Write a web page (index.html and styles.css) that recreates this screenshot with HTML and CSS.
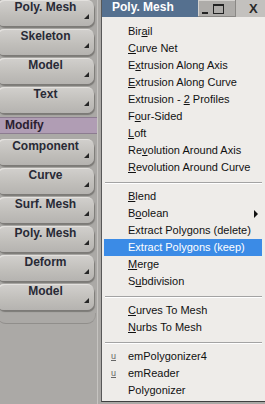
FILE: index.html
```html
<!DOCTYPE html>
<html>
<head>
    <meta charset="utf-8">
    <title>Poly. Mesh</title>
    <link rel="stylesheet" href="styles.css">
</head>
<body>

    <div class="shelf">
        <div class="tool">Poly. Mesh</div>
        <div class="tool">Skeleton</div>
        <div class="tool">Model</div>
        <div class="tool">Text</div>
        <div class="group">Modify</div>
        <div class="tool">Component</div>
        <div class="tool">Curve</div>
        <div class="tool">Surf. Mesh</div>
        <div class="tool">Poly. Mesh</div>
        <div class="tool">Deform</div>
        <div class="tool">Model</div>
        <div class="tool-end"></div>
    </div>

    <div class="menu">
        <div class="titlebar">
            <div class="title">Poly. Mesh</div>
            <div class="winbtns">
                <div class="btngroup">
                    <span class="wb-min"></span>
                    <span class="wb-max"></span>
                </div>
                <span class="wb-close">X</span>
            </div>
        </div>
        <div class="items">
            <div class="item">Bir<u>a</u>il</div>
            <div class="item"><u>C</u>urve Net</div>
            <div class="item">E<u>x</u>trusion Along Axis</div>
            <div class="item"><u>E</u>xtrusion Along Curve</div>
            <div class="item">Extrusion - <u>2</u> Profiles</div>
            <div class="item">F<u>o</u>ur-Sided</div>
            <div class="item"><u>L</u>oft</div>
            <div class="item">Re<u>v</u>olution Around Axis</div>
            <div class="item"><u>R</u>evolution Around Curve</div>
            <div class="sep"></div>
            <div class="item"><u>B</u>lend</div>
            <div class="item sub">B<u>o</u>olean</div>
            <div class="item">Extract Polygons (delete)</div>
            <div class="item active">Extract Polygons (keep)</div>
            <div class="item"><u>M</u>erge</div>
            <div class="item">S<u>u</u>bdivision</div>
            <div class="sep"></div>
            <div class="item"><u>C</u>urves To Mesh</div>
            <div class="item"><u>N</u>urbs To Mesh</div>
            <div class="sep"></div>
            <div class="item"><span class="mark">u</span>emPolygonizer4</div>
            <div class="item"><span class="mark">u</span>emReader</div>
            <div class="item">Polygonizer</div>
        </div>
    </div>

</body>
</html>
```

FILE: styles.css
```css
body {
    margin: 0;
    height: 404px;
    overflow: hidden;
    display: flex;
    background-color: #aba9a6;
    font-family: "Liberation Sans", Arial, sans-serif;
}

/* left shelf */
.shelf {
    width: 97px;
    border-right: 1px solid #c6c4c1;
    display: flex;
    flex-direction: column;
    gap: 3px;
}

.tool {
    position: relative;
    height: 26px;
    line-height: 27px;
    margin-left: -3px;
    margin-right: 3px;
    border-radius: 7px;
    background: linear-gradient(#d2d0cd, #c0beba 60%, #b5b3b0);
    box-shadow: 1px 2px 1px #7c7a77, inset 1px 1px 0 #e3e1de;
    text-align: center;
    font: bold 12px "Liberation Sans", Arial, sans-serif;
    color: #282a36;
}

.tool::after {
    content: "";
    position: absolute;
    right: 5px;
    bottom: 7px;
    width: 0;
    height: 0;
    border-style: solid;
    border-width: 0 0 5px 5px;
    border-color: transparent transparent #262626 transparent;
}

.tool-end {
    height: 10px;
    margin-left: -3px;
    margin-right: 1px;
    border-radius: 0 0 9px 9px;
    border-bottom: 1px solid #908e8b;
    border-right: 1px solid #9c9a97;
}

.group {
    height: 15px;
    line-height: 15px;
    margin: 1px 0 2px 0;
    padding-left: 5px;
    background-color: #b09db4;
    border-top: 1px solid #8c7c90;
    border-bottom: 1px solid #8c7c90;
    font: bold 12px "Liberation Sans", Arial, sans-serif;
    color: #2a2030;
}

/* popup menu */
.menu {
    margin-left: 3px;
    flex: 1;
    height: 401px;
    display: flex;
    flex-direction: column;
    background-color: #eeece9;
    border-left: 1px solid #585858;
    border-bottom: 1px solid #404040;
}

.titlebar {
    height: 17px;
    display: flex;
}

.title {
    width: 86px;
    padding-left: 10px;
    line-height: 17px;
    background-color: #55708f;
    color: #fff;
    font: bold 12px "Liberation Sans", Arial, sans-serif;
}

.winbtns {
    flex: 1;
    display: flex;
    align-items: center;
    background-color: #c3c1be;
}

.btngroup {
    height: 17px;
    width: 34px;
    display: flex;
    align-items: center;
    gap: 5px;
    padding-left: 4px;
    background-color: #aeaca9;
    box-shadow: inset -1px -1px 0 #8a8885, inset 1px 1px 0 #d4d2cf;
}

.wb-min {
    width: 6px;
    height: 2px;
    margin-top: 8px;
    background-color: #222;
}

.wb-max {
    width: 9px;
    height: 7px;
    border: 1px solid #222;
    border-top-width: 2px;
}

.wb-close {
    margin-left: 13px;
    font: bold 13px "Liberation Sans", Arial, sans-serif;
    color: #2a2a2a;
}

.items {
    padding: 6px 3px 0 2px;
}

.item {
    position: relative;
    height: 17px;
    line-height: 17px;
    padding-left: 24px;
    font-size: 11px;
    color: #111;
    white-space: nowrap;
}

.item.active {
    background-color: #3b8be6;
    color: #fff;
}

.item.sub::after {
    content: "";
    position: absolute;
    right: 4px;
    top: 5px;
    border-style: solid;
    border-width: 4px 0 4px 4px;
    border-color: transparent transparent transparent #111;
}

.mark {
    position: absolute;
    left: 7px;
    font-size: 9px;
    color: #666;
    text-decoration: underline;
}

.sep {
    height: 12px;
    display: flex;
    align-items: center;
}

.sep::before {
    content: "";
    flex: 1;
    margin-left: 1px;
    height: 1px;
    background-color: #a3a3a3;
    box-shadow: 0 1px 0 #fff;
}
```
